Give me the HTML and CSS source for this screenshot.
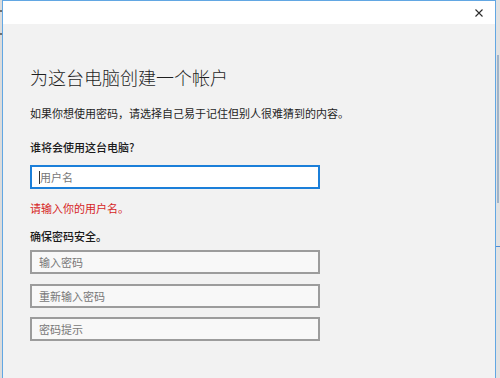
FILE: index.html
```html
<!DOCTYPE html>
<html lang="zh-CN">
<head>
<meta charset="utf-8">
<title>为这台电脑创建一个帐户</title>
<link rel="stylesheet" href="styles.css">
</head>
<body>
<div class="screen">
  <div class="left-strip">
    <span class="mark mark-a"></span>
    <span class="mark mark-b"></span>
  </div>
  <div class="window">
    <div class="titlebar">
      <svg class="close" width="8" height="8" viewBox="0 0 8 8">
        <path d="M0.5 0.5 L7.5 7.5 M7.5 0.5 L0.5 7.5" stroke="#2b2b2b" stroke-width="1.1" fill="none"/>
      </svg>
    </div>
    <div class="content">
      <h1 class="title">为这台电脑创建一个帐户</h1>
      <p class="intro">如果你想使用密码，请选择自己易于记住但别人很难猜到的内容。</p>
      <p class="label">谁将会使用这台电脑?</p>
      <div class="field field-active"><span class="caret"></span><span class="ph">用户名</span></div>
      <p class="error">请输入你的用户名。</p>
      <p class="label label-2">确保密码安全。</p>
      <div class="fields">
        <div class="field"><span class="ph">输入密码</span></div>
        <div class="field"><span class="ph">重新输入密码</span></div>
        <div class="field"><span class="ph">密码提示</span></div>
      </div>
    </div>
  </div>
  <div class="right-strip">
    <span class="rbar"></span>
    <span class="rline"></span>
  </div>
</div>
</body>
</html>
```

FILE: styles.css
```css
* { box-sizing: border-box; }
html, body {
  margin: 0;
  padding: 0;
  width: 500px;
  height: 378px;
  overflow: hidden;
  background: #e6e6e6;
  font-family: "Noto Sans CJK SC", "Noto Sans", sans-serif;
}
.screen {
  display: flex;
  width: 500px;
  height: 378px;
  overflow: hidden;
}
.left-strip {
  width: 2px;
  flex: none;
  background: #dcdcdc;
  position: relative;
}
.mark {
  position: absolute;
  left: 0;
  width: 2px;
  height: 2px;
  background: #6f6f6f;
}
.mark-a { top: 10px; }
.mark-b { top: 33px; }
.window {
  width: 494px;
  flex: none;
  height: 378px;
  overflow: hidden;
  border: 1px solid #62a7e3;
  border-bottom: none;
  background: #f2f2f2;
  display: flex;
  flex-direction: column;
}
.titlebar {
  height: 23px;
  background: #ffffff;
  display: flex;
  justify-content: flex-end;
  align-items: center;
  padding-right: 12px;
  flex: none;
}
.close { display: block; }
.content {
  padding: 0 0 0 27px;
}
.title {
  margin: 41px 0 0 0;
  font-size: 18px;
  line-height: 24px;
  font-weight: 300;
  color: #1f1f1f;
}
.intro {
  margin: 16px 0 0 0;
  font-size: 11px;
  line-height: 16px;
  color: #1f1f1f;
}
.label {
  margin: 18px 0 0 0;
  font-size: 11px;
  line-height: 16px;
  font-weight: 500;
  color: #1a1a1a;
}
.label-2 { margin-top: 12px; }
.field {
  width: 290px;
  height: 24px;
  border: 2px solid #9c9c9c;
  background: #f8f8f8;
  display: flex;
  align-items: center;
  padding-left: 7px;
}
.field-active {
  margin-top: 10px;
  border-color: #1b7fd9;
  background: #ffffff;
}
.caret {
  width: 1px;
  height: 13px;
  background: #333;
}
.ph {
  font-size: 11px;
  line-height: 16px;
  color: #777777;
}
.error {
  margin: 11px 0 0 0;
  font-size: 11px;
  line-height: 16px;
  color: #d61f1f;
  font-weight: 400;
}
.fields {
  margin-top: 6px;
  display: flex;
  flex-direction: column;
  gap: 9.5px;
}
.right-strip {
  width: 4px;
  flex: none;
  background: #e2e2e2;
  position: relative;
}
.rbar {
  position: absolute;
  left: 1px;
  top: 55px;
  width: 2px;
  height: 148px;
  background: #9fb3c8;
}
.rline {
  position: absolute;
  left: 0;
  top: 246px;
  width: 4px;
  height: 1px;
  background: #4f8fd6;
}
```
